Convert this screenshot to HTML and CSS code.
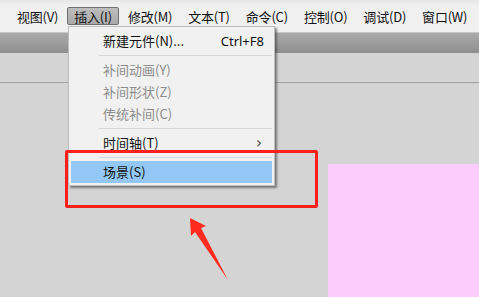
FILE: index.html
```html
<!DOCTYPE html>
<html lang="zh">
<head>
    <meta charset="UTF-8">
    <title>插入菜单</title>
    <link rel="stylesheet" href="styles.css">
</head>
<body>

    <div class="app">
        <div class="menubar">
            <span class="menu-item">视图(V)</span>
            <span class="menu-item active">插入(I)</span>
            <span class="menu-item">修改(M)</span>
            <span class="menu-item">文本(T)</span>
            <span class="menu-item">命令(C)</span>
            <span class="menu-item">控制(O)</span>
            <span class="menu-item">调试(D)</span>
            <span class="menu-item">窗口(W)</span>
        </div>
        <div class="toolbar"></div>
        <div class="workspace">
            <div class="timeline"></div>
            <div class="stage"></div>
        </div>
    </div>

    <div class="dropdown">
        <div class="drop-item"><span>新建元件(N)...</span><span class="shortcut">Ctrl+F8</span></div>
        <div class="sep"></div>
        <div class="drop-item disabled"><span>补间动画(Y)</span></div>
        <div class="drop-item disabled"><span>补间形状(Z)</span></div>
        <div class="drop-item disabled"><span>传统补间(C)</span></div>
        <div class="sep"></div>
        <div class="drop-item"><span>时间轴(T)</span><span class="submenu">&#x203A;</span></div>
        <div class="sep"></div>
        <div class="drop-item selected"><span>场景(S)</span></div>
    </div>

    <div class="callout"></div>

    <svg class="arrow" width="479" height="297" viewBox="0 0 479 297">
        <polygon points="190,218 206,226 201,228 228,280 195,232 191,236" fill="#ff2a1f"/>
    </svg>

</body>
</html>
```

FILE: styles.css
```css
* {
    box-sizing: border-box;
}
body {
    margin: 0;
    width: 479px;
    height: 297px;
    overflow: hidden;
    background: #d4d4d4;
    font-family: "Noto Sans CJK SC", "Liberation Sans", sans-serif;
    font-size: 13px;
    color: #111;
}
.app {
    display: flex;
    flex-direction: column;
    height: 297px;
}
.menubar {
    display: flex;
    align-items: center;
    height: 32px;
    padding: 0 0 0 10px;
    gap: 2px;
    background: linear-gradient(#e6e6e6, #f0f0f0 5px, #f0f0f0);
}
.menu-item {
    padding: 0 6px;
    height: 18px;
    line-height: 17px;
    border: 1px solid transparent;
    white-space: nowrap;
    letter-spacing: -0.2px;
}
.menu-item.active {
    margin-top: -1px;
    background: linear-gradient(#bdbdbd, #a9a9a9);
    border-color: #6e6e6e;
    border-radius: 2px;
}
.toolbar {
    height: 21px;
    border-top: 1px solid #c9c9c9;
    background: linear-gradient(#ababab, #8e8e8e);
}
.workspace {
    flex: 1;
    position: relative;
    background: #d4d4d4;
}
.timeline {
    margin-top: 29px;
    height: 1px;
    background: #a2a2a2;
}
.stage {
    position: absolute;
    left: 328px;
    top: 111px;
    right: 0;
    bottom: 0;
    background: #fccbff;
}
.dropdown {
    position: absolute;
    left: 68px;
    top: 26px;
    width: 207px;
    height: 160px;
    padding: 3px 2px 0 2px;
    background: #f1f1f1;
    border: 1px solid #bdbdbd;
    box-shadow: 2px 2px 2px rgba(60, 60, 60, 0.6);
}
.drop-item {
    display: flex;
    justify-content: space-between;
    align-items: center;
    height: 22px;
    padding: 0 8px 0 32px;
    line-height: 22px;
    white-space: nowrap;
}
.drop-item.disabled {
    color: #8c8c8c;
}
.drop-item.selected {
    background: #93c8f6;
}
.shortcut {
    font-family: "Noto Sans", "Liberation Sans", sans-serif;
}
.submenu {
    font-family: "DejaVu Sans", sans-serif;
    font-size: 15px;
    color: #444;
    padding-right: 2px;
}
.sep {
    margin: 3px 0 3px 28px;
    height: 1px;
    background: #d6d6d6;
}
.callout {
    position: absolute;
    left: 65px;
    top: 150px;
    width: 253px;
    height: 58px;
    border: 3px solid #ff1f1a;
    border-radius: 2px;
}
.arrow {
    position: absolute;
    left: 0;
    top: 0;
}
```
